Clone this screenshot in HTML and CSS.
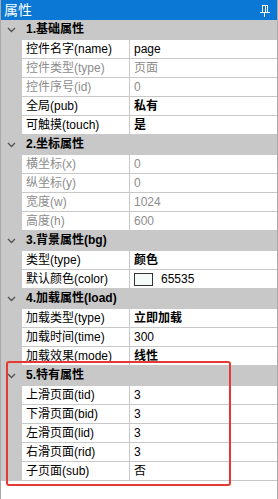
FILE: index.html
```html
<!DOCTYPE html>
<html lang="zh">
<head>
  <meta charset="UTF-8">
  <title>属性</title>
  <link rel="stylesheet" href="styles.css">
</head>
<body>
<div class="panel">
  <div class="titlebar">
    <span class="title">属性</span>
    <svg class="pin" width="10" height="12" viewBox="0 0 10 12">
      <rect x="2.5" y="0.5" width="5" height="7" fill="none" stroke="#fff" stroke-width="1"/>
      <line x1="5.5" y1="1" x2="5.5" y2="7" stroke="#fff" stroke-width="1"/>
      <line x1="0" y1="7.5" x2="10" y2="7.5" stroke="#fff" stroke-width="1"/>
      <line x1="4.5" y1="8" x2="4.5" y2="12" stroke="#fff" stroke-width="1"/>
    </svg>
  </div>

  <div class="grid">
    <div class="cat">
      <svg class="chev" width="9" height="6" viewBox="0 0 9 6"><polyline points="1,1 4.5,4.5 8,1" fill="none" stroke="#555" stroke-width="1.4"/></svg>
      <span>1.基础属性</span>
    </div>
    <div class="prop"><i></i><div class="name">控件名字(name)</div><div class="val">page</div></div>
    <div class="prop off"><i></i><div class="name">控件类型(type)</div><div class="val">页面</div></div>
    <div class="prop off"><i></i><div class="name">控件序号(id)</div><div class="val">0</div></div>
    <div class="prop"><i></i><div class="name">全局(pub)</div><div class="val b">私有</div></div>
    <div class="prop"><i></i><div class="name">可触摸(touch)</div><div class="val b">是</div></div>

    <div class="cat">
      <svg class="chev" width="9" height="6" viewBox="0 0 9 6"><polyline points="1,1 4.5,4.5 8,1" fill="none" stroke="#555" stroke-width="1.4"/></svg>
      <span>2.坐标属性</span>
    </div>
    <div class="prop off"><i></i><div class="name">横坐标(x)</div><div class="val">0</div></div>
    <div class="prop off"><i></i><div class="name">纵坐标(y)</div><div class="val">0</div></div>
    <div class="prop off"><i></i><div class="name">宽度(w)</div><div class="val">1024</div></div>
    <div class="prop off"><i></i><div class="name">高度(h)</div><div class="val">600</div></div>

    <div class="cat">
      <svg class="chev" width="9" height="6" viewBox="0 0 9 6"><polyline points="1,1 4.5,4.5 8,1" fill="none" stroke="#555" stroke-width="1.4"/></svg>
      <span>3.背景属性(bg)</span>
    </div>
    <div class="prop"><i></i><div class="name">类型(type)</div><div class="val b">颜色</div></div>
    <div class="prop"><i></i><div class="name">默认颜色(color)</div><div class="val"><span class="swatch"></span>65535</div></div>

    <div class="cat">
      <svg class="chev" width="9" height="6" viewBox="0 0 9 6"><polyline points="1,1 4.5,4.5 8,1" fill="none" stroke="#555" stroke-width="1.4"/></svg>
      <span>4.加载属性(load)</span>
    </div>
    <div class="prop"><i></i><div class="name">加载类型(type)</div><div class="val b">立即加载</div></div>
    <div class="prop"><i></i><div class="name">加载时间(time)</div><div class="val">300</div></div>
    <div class="prop"><i></i><div class="name">加载效果(mode)</div><div class="val b">线性</div></div>

    <div class="cat">
      <svg class="chev" width="9" height="6" viewBox="0 0 9 6"><polyline points="1,1 4.5,4.5 8,1" fill="none" stroke="#555" stroke-width="1.4"/></svg>
      <span>5.特有属性</span>
    </div>
    <div class="prop"><i></i><div class="name">上滑页面(tid)</div><div class="val">3</div></div>
    <div class="prop"><i></i><div class="name">下滑页面(bid)</div><div class="val">3</div></div>
    <div class="prop"><i></i><div class="name">左滑页面(lid)</div><div class="val">3</div></div>
    <div class="prop"><i></i><div class="name">右滑页面(rid)</div><div class="val">3</div></div>
    <div class="prop"><i></i><div class="name">子页面(sub)</div><div class="val">否</div></div>
  </div>

  <div class="mark"></div>
</div>
</body>
</html>
```

FILE: styles.css
```css
*{
  box-sizing: border-box;
}
body{
  margin: 0;
  padding: 0;
  background: #fff;
  font-family: "Liberation Sans", "Noto Sans CJK SC", sans-serif;
  font-size: 12px;
  color: #000;
}
.panel{
  position: relative;
  width: 278px;
  height: 499px;
  border-left: 1px solid #a9a9a9;
  border-right: 1px solid #a9a9a9;
  overflow: hidden;
}
.titlebar{
  height: 20px;
  margin: 0 -1px;
  background: #0a78d4;
  color: #fff;
  display: flex;
  align-items: center;
  justify-content: space-between;
  padding: 0 8px 0 4px;
}
.title{
  font-size: 14px;
  line-height: 20px;
}
.pin{
  display: block;
  margin-top: 1px;
}

.grid{
  margin-left: -1px;
}
.cat{
  height: 20px;
  background: #c8c8c8;
  display: flex;
  align-items: center;
  font-weight: bold;
  border-bottom: 1px solid #c8c8c8;
}
.cat .chev{
  margin: 0 10px 0 7px;
}
.cat span{
  line-height: 19px;
}
.prop{
  display: grid;
  grid-template-columns: 22px 108px 1fr;
  height: 19px;
  line-height: 18px;
}
.prop i{
  background: #c8c8c8;
}
.prop .name{
  padding-left: 4px;
  border-right: 1px solid #c8c8c8;
  border-bottom: 1px solid #c8c8c8;
  white-space: nowrap;
}
.prop .val{
  padding-left: 4px;
  border-bottom: 1px solid #c8c8c8;
  display: flex;
  align-items: center;
  white-space: nowrap;
}
.prop.off .name,
.prop.off .val{
  color: #8d8d8d;
}
.val.b{
  font-weight: bold;
}
.swatch{
  width: 19px;
  height: 13px;
  border: 1px solid #333;
  background: #f4fbf8;
  margin-right: 8px;
}

.mark{
  position: absolute;
  left: 5px;
  top: 361px;
  width: 225px;
  height: 125px;
  border: 2px solid #e53935;
  border-radius: 3px;
}
```
